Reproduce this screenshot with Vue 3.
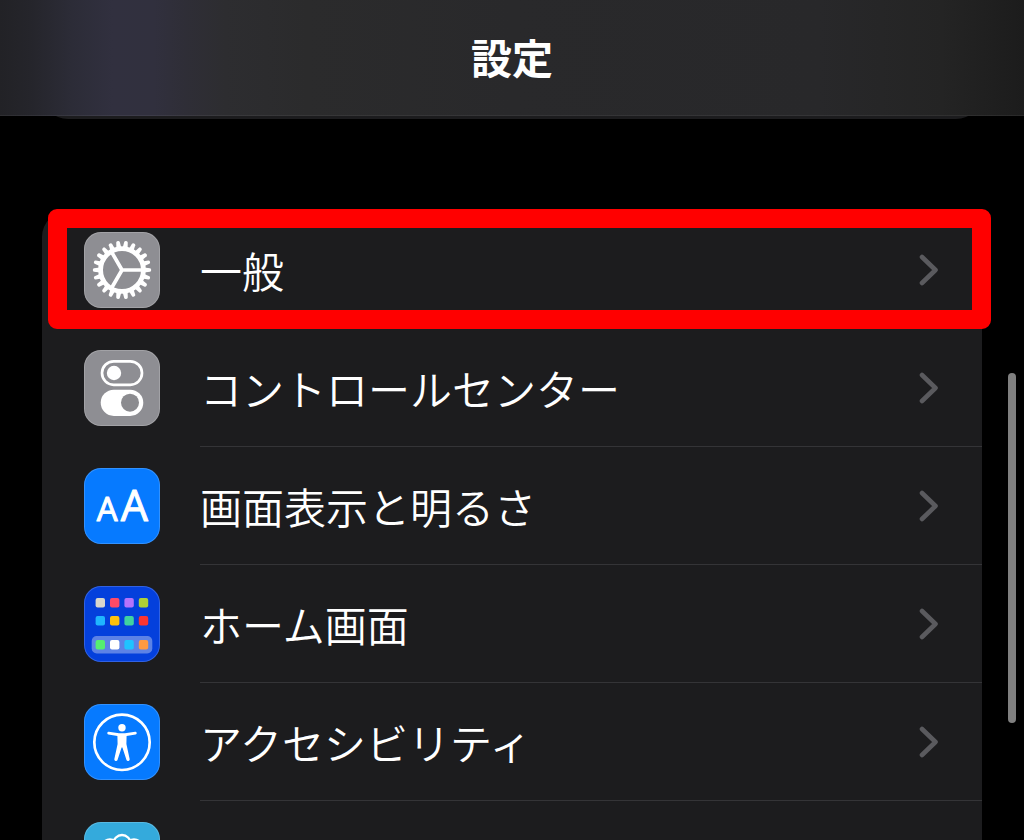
<script setup>
const rows = [
  { id: 'general', label: '一般', highlighted: true },
  { id: 'control', label: 'コントロールセンター' },
  { id: 'display', label: '画面表示と明るさ' },
  { id: 'home', label: 'ホーム画面' },
  { id: 'access', label: 'アクセシビリティ' },
  { id: 'wallpaper', label: '' },
]

const teeth = Array.from({ length: 22 }, (_, i) => (i * 360) / 22)

const appColors = [
  ['#d8d7cc', '#ff4a67', '#b473fc', '#aed136'],
  ['#1fb6ff', '#ffc20a', '#40d3a0', '#fc3530'],
  ['#55ef70', '#ffffff', '#1fc3ff', '#ff9a42'],
]
const appRowY = [12, 30, 54]
const apps = appColors.flatMap((colors, r) =>
  colors.map((color, c) => ({ color, x: 11.6 + c * 14.4, y: appRowY[r] }))
)
</script>

<template>
  <div class="screen">
    <header class="bar">
      <h1>設定</h1>
    </header>

    <main class="content">
      <div class="group previous"></div>
      <nav class="group list" aria-label="設定">
        <a v-for="row in rows" :key="row.id" href="#" class="row">
          <svg class="icon" :class="row.id" viewBox="0 0 76 76" aria-hidden="true">
            <g v-if="row.id === 'general'" fill="#fff">
              <path
                v-for="a in teeth"
                :key="a"
                d="M60 35.5 L66 36.2 Q67.2 36.5 67.2 38 Q67.2 39.5 66 39.8 L60 40.5 Z"
                :transform="`rotate(${a} 38 38)`"
              />
              <circle cx="38" cy="38" r="21.4" fill="none" stroke="#fff" stroke-width="4.8" />
              <path
                d="M38 38 H58 M38 38 L28 20.7 M38 38 L28 55.3"
                fill="none"
                stroke="#fff"
                stroke-width="3.7"
              />
            </g>
            <g v-else-if="row.id === 'control'">
              <rect x="18" y="11.4" width="40" height="23.4" rx="11.7" fill="none" stroke="#fff" stroke-width="2.7" />
              <circle cx="30" cy="23" r="7.2" fill="#fff" />
              <rect x="16.7" y="39.7" width="42.6" height="26.2" rx="13.1" fill="#fff" />
              <circle cx="46" cy="52.7" r="9" fill="#8b8b8f" />
            </g>
            <g v-else-if="row.id === 'display'" class="letters">
              <text x="23.2" y="53.4" font-size="33">A</text>
              <text x="50.3" y="53.4" font-size="43">A</text>
            </g>
            <g v-else-if="row.id === 'home'">
              <rect x="7.7" y="50" width="60.6" height="17.4" rx="5" fill="#5c82e6" />
              <rect
                v-for="(app, i) in apps"
                :key="i"
                :x="app.x"
                :y="app.y"
                width="9.4"
                height="9.4"
                rx="2"
                :fill="app.color"
              />
            </g>
            <g v-else-if="row.id === 'access'">
              <circle cx="38" cy="38.3" r="27.7" fill="none" stroke="#fff" stroke-width="2.7" />
              <circle cx="38" cy="23.7" r="3.7" fill="#fff" />
              <path
                d="M24.8 27.8 L35 29.2 H41 L51.2 27.8 A1.3 1.3 0 0 1 51.6 30.4 L42.6 32 L42.4 40 L45.6 54.8 A1.6 1.6 0 0 1 42.5 56 L38.4 43.5 H37.6 L33.5 56 A1.6 1.6 0 0 1 30.4 54.8 L33.6 40 L33.4 32 L24.4 30.4 A1.3 1.3 0 0 1 24.8 27.8 Z"
                fill="#fff"
              />
            </g>
            <g v-else fill="#34aadc" stroke="#fff" stroke-width="2.4">
              <circle cx="26" cy="26" r="8.5" />
              <circle cx="50" cy="26" r="8.5" />
              <circle cx="26" cy="50" r="8.5" />
              <circle cx="50" cy="50" r="8.5" />
              <circle cx="38" cy="21.5" r="8.5" />
              <circle cx="54.5" cy="38" r="8.5" />
              <circle cx="38" cy="54.5" r="8.5" />
              <circle cx="21.5" cy="38" r="8.5" />
              <circle cx="38" cy="38" r="8.5" />
            </g>
          </svg>
          <span class="body">
            <span class="label">{{ row.label }}</span>
            <svg class="chevron" viewBox="0 0 20 32" aria-hidden="true">
              <path d="M3 3 L16.5 16 L3 29" />
            </svg>
          </span>
          <span v-if="row.highlighted" class="highlight"></span>
        </a>
      </nav>
    </main>

    <div class="scrollbar"></div>
  </div>
</template>

<style>
body {
  background: #000;
}
</style>

<style scoped>
.screen {
  position: relative;
  display: flex;
  flex-direction: column;
  height: 100vh;
  overflow: hidden;
  background: #000;
  color: #fff;
  font-family: "Noto Sans CJK JP", sans-serif;
}
.bar {
  position: relative;
  z-index: 1;
  flex: none;
  display: flex;
  align-items: center;
  justify-content: center;
  box-sizing: border-box;
  height: 116px;
  padding-bottom: 4px;
  border-bottom: 1px solid rgba(255, 255, 255, 0.06);
  background: linear-gradient(
    90deg,
    #222226 0%,
    #25252b 3%,
    #2c2c37 7%,
    #31303f 11%,
    #31303e 15%,
    #2f2e37 18%,
    #2d2d30 22%,
    #2b2b2c 30%,
    #29292b 50%,
    #28282a 80%,
    #242424 92%,
    #1c1c1c 100%
  );
}
h1 {
  margin: 0;
  font-size: 41px;
  line-height: 60px;
  font-weight: 700;
}
.content {
  flex: 1;
  min-height: 0;
  padding: 0 42px;
}
.group {
  background: #1c1c1e;
  border-radius: 26px;
}
.previous {
  height: 60px;
  margin-top: -57px;
}
.list {
  margin-top: 92px;
}
.row {
  position: relative;
  display: flex;
  align-items: center;
  gap: 40px;
  padding-left: 42px;
  color: inherit;
  text-decoration: none;
}
.icon {
  flex: none;
  box-sizing: border-box;
  width: 76px;
  height: 76px;
  border-radius: 17px;
  box-shadow: inset 0 0 0 1px rgba(255, 255, 255, 0.18);
}
.general,
.control {
  background: #8e8e93;
}
.display,
.access {
  background: #067aff;
}
.home {
  background: #0440dc;
}
.wallpaper {
  background: #34aadc;
}
.letters {
  font-family: "Open Sans", sans-serif;
  font-weight: 400;
  text-anchor: middle;
  fill: #fff;
  stroke: #fff;
  stroke-width: 1;
  stroke-linejoin: round;
}
.body {
  flex: 1;
  display: flex;
  align-items: center;
  justify-content: space-between;
  box-sizing: border-box;
  min-height: 118px;
  padding-right: 43px;
  border-bottom: 1px solid #343437;
}
.label {
  font-size: 42px;
  line-height: 62px;
  font-weight: 350;
}
.chevron {
  flex: none;
  width: 20px;
  height: 32px;
  fill: none;
  stroke: #5a5a5e;
  stroke-width: 4.6;
  stroke-linecap: round;
  stroke-linejoin: round;
}
.highlight {
  position: absolute;
  inset: -2px -9px 0 6px;
  border: 19px solid #f00;
  border-radius: 9px;
  pointer-events: none;
}
.scrollbar {
  position: absolute;
  top: 373px;
  right: 8px;
  width: 8px;
  height: 350px;
  border-radius: 4px;
  background: #808080;
}
</style>
